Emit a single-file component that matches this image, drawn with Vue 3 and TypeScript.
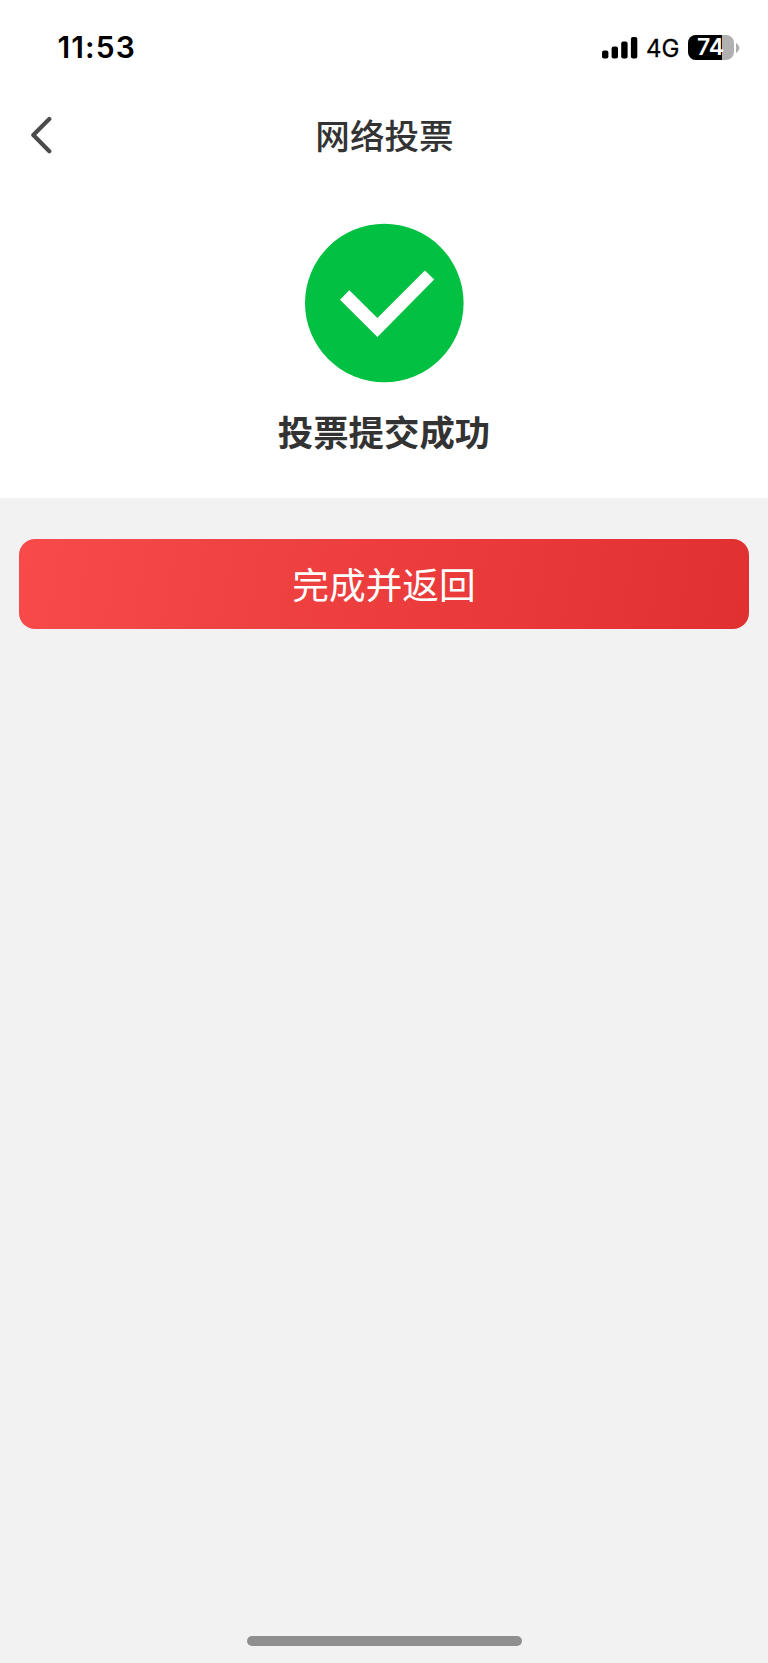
<script setup lang="ts">
import { ref } from 'vue'

const time = ref<string>('11:53')
const network = ref<string>('4G')
const battery = ref<number>(74)
</script>

<template>
  <main class="screen">
    <section class="top">
      <header class="status">
        <span class="time">{{ time }}</span>
        <div class="indicators">
          <svg class="signal" width="36" height="22" viewBox="0 0 36 22">
            <rect x="0" y="13.5" width="6.4" height="8" rx="2" />
            <rect x="9.6" y="9.5" width="6.4" height="12" rx="2" />
            <rect x="19.2" y="4.5" width="6.4" height="17" rx="2" />
            <rect x="28.9" y="0" width="6.4" height="21.5" rx="2" />
          </svg>
          <span class="network">{{ network }}</span>
          <div class="battery">
            <div class="cell">
              <div class="charge" :style="{ width: battery + '%' }"></div>
              <span class="level">{{ battery }}</span>
            </div>
            <svg class="nub" width="4" height="10" viewBox="0 0 4 10">
              <path d="M0 0C2 1 3.3 2.7 3.3 5S2 9 0 10Z" />
            </svg>
          </div>
        </div>
      </header>
      <nav class="navbar">
        <button class="back" type="button" aria-label="返回">
          <svg width="22" height="38" viewBox="0 0 22 38">
            <path d="M18.3 3.1L2.3 19.1L18.3 35.3" />
          </svg>
        </button>
        <h1 class="title">网络投票</h1>
      </nav>
      <div class="result">
        <svg class="success" width="160" height="160" viewBox="0 0 160 160">
          <circle cx="80.3" cy="80" r="79.3" fill="#02c041" />
          <path d="M36 76.7L45.3 67.3L73.4 95L120.9 47.5L130.2 56.5L73.4 114Z" fill="#fff" />
        </svg>
        <p class="message">投票提交成功</p>
      </div>
    </section>
    <section class="actions">
      <button class="done" type="button">完成并返回</button>
    </section>
    <div class="home"></div>
  </main>
</template>

<style>
body {
  margin: 0;
  background: #f2f2f2;
}
</style>

<style scoped>
.screen {
  display: flex;
  flex-direction: column;
  box-sizing: border-box;
  width: 768px;
  height: 1663px;
  padding-bottom: 17px;
  background: #f2f2f2;
  font-family: "Noto Sans CJK SC", sans-serif;
  color: #333;
}
button {
  border: 0;
  font-family: inherit;
}
svg {
  display: block;
}
.top {
  height: 498px;
  background: #fff;
}
.status {
  display: flex;
  justify-content: space-between;
  align-items: center;
  height: 95px;
  padding: 0 28px 0 57.5px;
  box-sizing: border-box;
  font-family: Inter, sans-serif;
  color: #000;
}
.time {
  padding-bottom: 2px;
  font-size: 30px;
  font-weight: 600;
  line-height: 36px;
  letter-spacing: 1.1px;
}
.indicators {
  display: flex;
  align-items: center;
}
.network {
  margin: 2px 7px 0 8px;
  width: 35px;
  font-size: 24px;
  line-height: 32px;
  -webkit-text-stroke: 0.3px #000;
}
.battery {
  display: flex;
  align-items: center;
  gap: 2px;
}
.cell {
  position: relative;
  width: 46px;
  height: 25px;
  border-radius: 8px;
  background: #b0b0b0;
  overflow: hidden;
}
.charge {
  height: 100%;
  background: #000;
}
.level {
  position: absolute;
  inset: 0 1px 0 0;
  font-size: 23px;
  font-weight: 600;
  line-height: 25px;
  text-align: center;
  color: #fff;
}
.nub {
  fill: #b0b0b0;
}
.navbar {
  display: grid;
  grid-template-columns: 100px 1fr 100px;
  align-items: center;
  height: 80px;
}
.back {
  padding: 0 0 0 31.4px;
  background: none;
}
.back path {
  fill: none;
  stroke: #4b4b4b;
  stroke-width: 4.2;
  stroke-linecap: round;
  stroke-linejoin: round;
}
.title {
  margin: 0;
  padding: 0 0 3px 1px;
  font-size: 34.6px;
  font-weight: 500;
  line-height: 50px;
  text-align: center;
}
.result {
  display: flex;
  flex-direction: column;
  align-items: center;
  padding-top: 48px;
}
.message {
  margin: 22px 0 0;
  font-size: 35.4px;
  font-weight: 700;
  line-height: 52px;
}
.actions {
  flex: 1;
  padding: 41px 19px 0;
}
.done {
  display: block;
  width: 100%;
  height: 90px;
  padding: 0 0 2px;
  border-radius: 16px;
  background: linear-gradient(100deg, #f84a4a, #e13031);
  font-size: 36.7px;
  line-height: 88px;
  color: #fff;
}
.home {
  align-self: center;
  width: 275px;
  height: 10px;
  border-radius: 5px;
  background: #8f8f8f;
}
</style>
